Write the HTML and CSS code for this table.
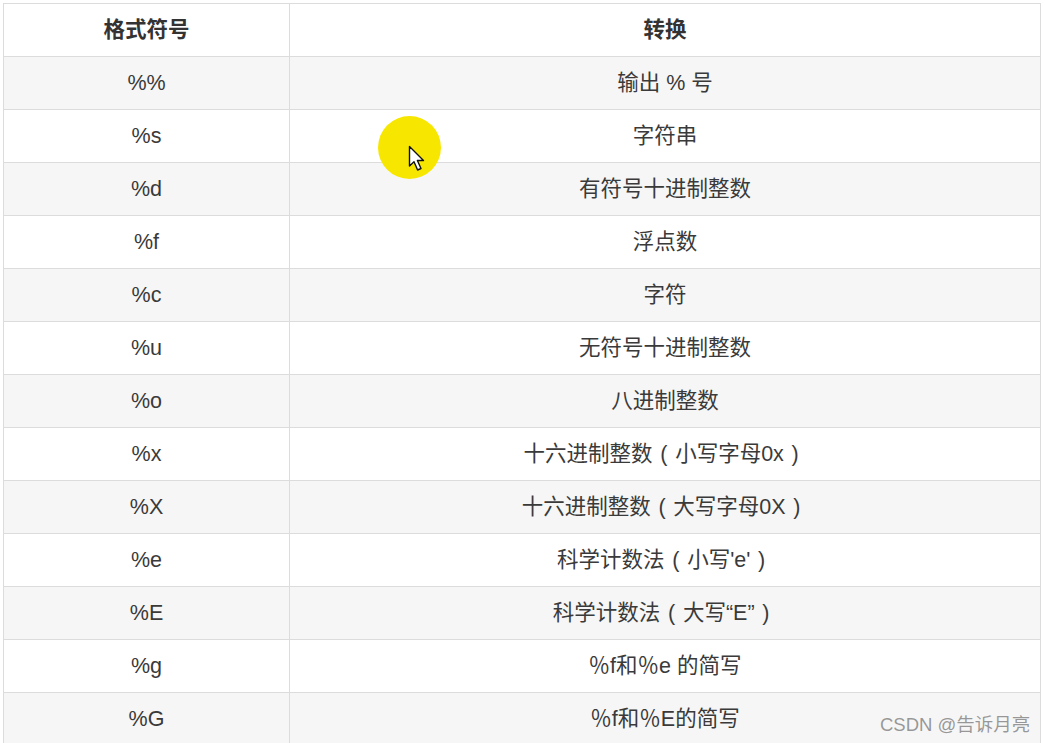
FILE: index.html
```html
<!DOCTYPE html>
<html lang="zh-CN">
<head>
<meta charset="utf-8">
<title>格式符号</title>
<link rel="stylesheet" href="styles.css">
</head>
<body>
<div class="page">
<table class="fmt">
<thead>
<tr><th class="c1">格式符号</th><th class="c2">转换</th></tr>
</thead>
<tbody>
<tr><td>%%</td><td>输出 % 号</td></tr>
<tr><td>%s</td><td>字符串</td></tr>
<tr><td>%d</td><td>有符号十进制整数</td></tr>
<tr><td>%f</td><td>浮点数</td></tr>
<tr><td>%c</td><td>字符</td></tr>
<tr><td>%u</td><td>无符号十进制整数</td></tr>
<tr><td>%o</td><td>八进制整数</td></tr>
<tr><td>%x</td><td>十六进制整数<span class="paren">(</span>小写字母0x<span class="paren">)</span></td></tr>
<tr><td>%X</td><td>十六进制整数<span class="paren">(</span>大写字母0X<span class="paren">)</span></td></tr>
<tr><td>%e</td><td>科学计数法<span class="paren">(</span>小写'e'<span class="paren">)</span></td></tr>
<tr><td>%E</td><td>科学计数法<span class="paren">(</span>大写“E”<span class="paren">)</span></td></tr>
<tr><td>%g</td><td>％f和％e 的简写</td></tr>
<tr><td>%G</td><td>％f和％E的简写</td></tr>
</tbody>
</table>
<div class="spot"></div>
<svg class="cursor" width="18" height="27" viewBox="0 0 18 27">
<path d="M1.5 1.5 L1.5 21 L6 16.8 L9.6 25 L13 23.5 L9.4 15.5 L15.5 15.5 Z" fill="#fff" stroke="#111" stroke-width="1.4" stroke-linejoin="round"/>
</svg>
<div class="mark">CSDN @告诉月亮</div>
</div>
</body>
</html>
```
FILE: styles.css
```css
html, body {
  margin: 0;
  padding: 0;
  background: #fff;
}
body {
  font-family: "Liberation Sans", "Noto Sans CJK SC", sans-serif;
  color: #333;
  overflow: hidden;
}
.page {
  position: relative;
  width: 1045px;
  height: 743px;
  padding: 3px 0 0 3px;
  box-sizing: border-box;
  overflow: hidden;
}
.fmt {
  border-collapse: collapse;
  width: 1038px;
  table-layout: fixed;
  font-size: 21.5px;
}
.fmt th, .fmt td {
  border: 1px solid #dcdcdc;
  height: 52px;
  padding: 0;
  text-align: center;
  vertical-align: middle;
  line-height: 24px;
}
.fmt .c1 { width: 285px; }
.fmt th {
  font-weight: bold;
  color: #333;
  background: #fff;
}
.fmt td { color: #3a3a3a; }
.fmt tbody tr:nth-child(odd) td { background: #f6f6f6; }
.fmt tbody tr:nth-child(even) td { background: #fff; }
.paren {
  display: inline-block;
  width: 1.05em;
  text-align: center;
  font-family: "Liberation Sans", sans-serif;
}
.spot {
  position: absolute;
  left: 378px;
  top: 116px;
  width: 63px;
  height: 63px;
  border-radius: 50%;
  background: #f7e700;
}
.cursor {
  position: absolute;
  left: 408px;
  top: 145px;
}
.mark {
  position: absolute;
  left: 880px;
  top: 710px;
  font-size: 18.5px;
  color: rgba(120, 120, 120, 0.75);
  white-space: nowrap;
}
```
